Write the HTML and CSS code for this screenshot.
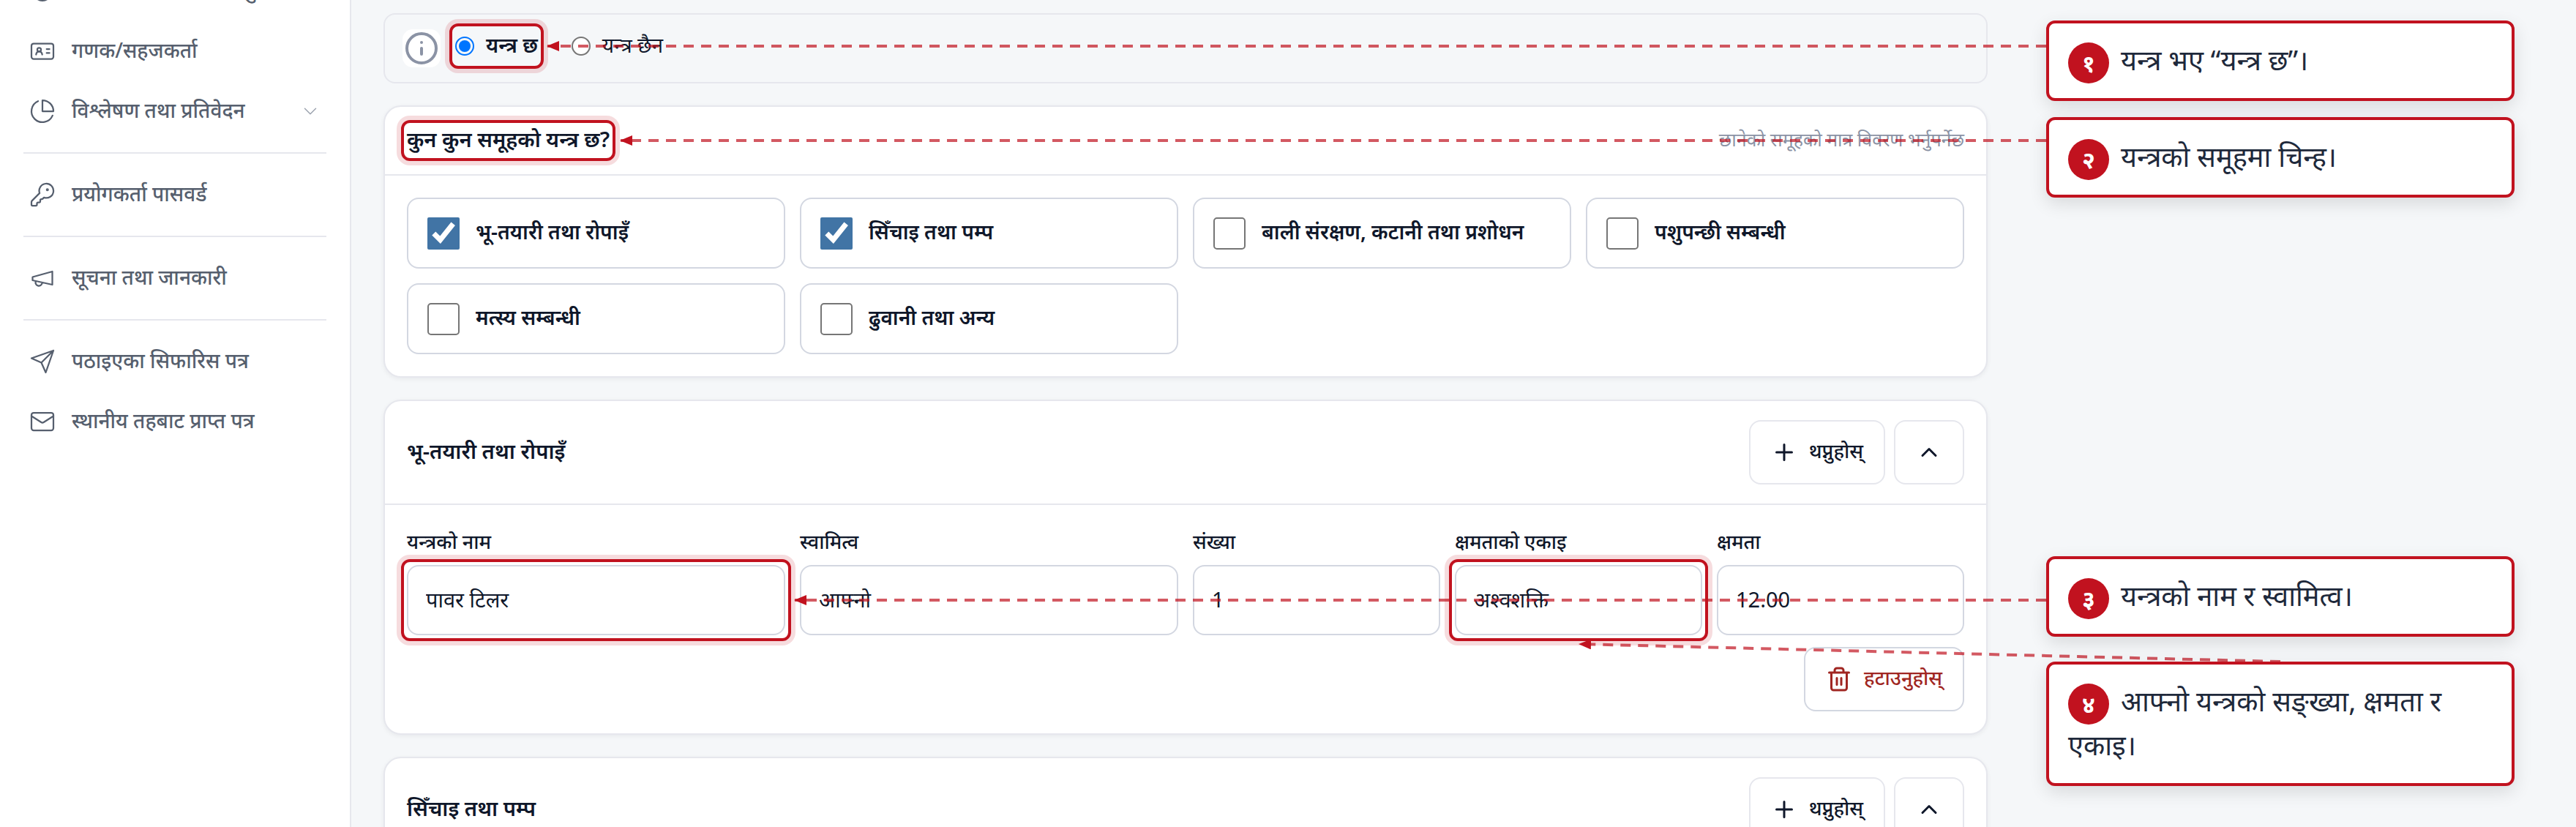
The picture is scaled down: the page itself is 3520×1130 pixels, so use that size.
FILE: index.html
```
<!DOCTYPE html>
<html lang="ne">
<head>
    <meta charset="UTF-8">
    <meta name="viewport" content="width=device-width, initial-scale=1.0">
    <title>यन्त्र विवरण</title>
    <link rel="stylesheet" href="styles.css">
</head>
<body>
<div class="app">
    <nav class="sidebar">
        <ul class="menu">
            <li><a href="#">
                <svg class="icon" viewBox="0 0 24 24"><circle cx="12" cy="12" r="8.5"/></svg>
                <span>किसान परिवार तथा वस्तु</span>
            </a></li>
            <li><a href="#">
                <svg class="icon" viewBox="0 0 24 24"><rect x="2" y="5" width="20" height="14" rx="2"/><circle cx="9" cy="10.6" r="1.7"/><path d="M6.2 15c.3-1.6 1.4-2.7 2.8-2.7s2.5 1.1 2.8 2.7M15.8 10h2.6M15.8 13.6h2.6"/></svg>
                <span>गणक/सहजकर्ता</span>
            </a></li>
            <li><a href="#">
                <svg class="icon" viewBox="0 0 24 24"><path d="M21.2 15.9A10 10 0 1 1 8 2.8M22 12A10 10 0 0 0 12 2v10Z"/></svg>
                <span>विश्लेषण तथा प्रतिवेदन</span>
                <svg class="chevron" viewBox="0 0 24 24"><path d="m4.5 8.25 7.5 7.5 7.5-7.5"/></svg>
            </a></li>
            <li class="divider"></li>
            <li><a href="#">
                <svg class="icon" viewBox="0 0 24 24"><path d="M2.6 17.4A2 2 0 0 0 2 18.8V21a1 1 0 0 0 1 1h3a1 1 0 0 0 1-1v-1a1 1 0 0 1 1-1h1a1 1 0 0 0 1-1v-1a1 1 0 0 1 1-1h.2a2 2 0 0 0 1.4-.6l.8-.8a6.5 6.5 0 1 0-4-4Z"/><circle cx="16.5" cy="7.5" r=".6"/></svg>
                <span>प्रयोगकर्ता पासवर्ड</span>
            </a></li>
            <li class="divider"></li>
            <li><a href="#">
                <svg class="icon" viewBox="0 0 24 24"><path d="m3 11 18-5v12L3 14v-3ZM11.6 16.8a3 3 0 1 1-5.8-1.6"/></svg>
                <span>सूचना तथा जानकारी</span>
            </a></li>
            <li class="divider"></li>
            <li><a href="#">
                <svg class="icon" viewBox="0 0 24 24"><path d="M22 2 11 13M22 2l-7 20-4-9-9-4 20-7Z"/></svg>
                <span>पठाइएका सिफारिस पत्र</span>
            </a></li>
            <li><a href="#">
                <svg class="icon" viewBox="0 0 24 24"><rect x="2" y="4" width="20" height="16" rx="2"/><path d="m2 7 8.9 5.7a2 2 0 0 0 2.2 0L22 7"/></svg>
                <span>स्थानीय तहबाट प्राप्त पत्र</span>
            </a></li>
        </ul>
    </nav>

    <main class="content">
        <section class="notice">
            <span class="info"><svg viewBox="0 0 24 24"><circle cx="12" cy="12" r="10"/><path d="M12 16v-4M12 8h.01"/></svg></span>
            <label class="radio radio-on mark"><input type="radio" name="machine" checked><span>यन्त्र छ</span></label>
            <label class="radio"><input type="radio" name="machine"><span>यन्त्र छैन</span></label>
        </section>

        <section class="card">
            <div class="card-head">
                <h2 class="mark">कुन कुन समूहको यन्त्र छ?</h2>
                <span class="hint">छानेको समूहको मात्र विवरण भर्नुपर्नेछ</span>
            </div>
            <div class="options">
                <label class="option"><input type="checkbox" checked><span>भू-तयारी तथा रोपाइँ</span></label>
                <label class="option"><input type="checkbox" checked><span>सिँचाइ तथा पम्प</span></label>
                <label class="option"><input type="checkbox"><span>बाली संरक्षण, कटानी तथा प्रशोधन</span></label>
                <label class="option"><input type="checkbox"><span>पशुपन्छी सम्बन्धी</span></label>
                <label class="option"><input type="checkbox"><span>मत्स्य सम्बन्धी</span></label>
                <label class="option"><input type="checkbox"><span>ढुवानी तथा अन्य</span></label>
            </div>
        </section>

        <section class="card">
            <div class="card-head">
                <h2>भू-तयारी तथा रोपाइँ</h2>
                <div class="actions">
                    <button type="button" class="btn"><svg viewBox="0 0 24 24"><path d="M12 5v14M5 12h14"/></svg><span>थप्नुहोस्</span></button>
                    <button type="button" class="btn btn-toggle" aria-label="बन्द"><svg viewBox="0 0 24 24"><path d="m18 15-6-6-6 6"/></svg></button>
                </div>
            </div>
            <div class="fields">
                <div class="field wide">
                    <label for="name">यन्त्रको नाम</label>
                    <div class="control mark"><input type="text" id="name" value="पावर टिलर"></div>
                </div>
                <div class="field wide">
                    <label for="owner">स्वामित्व</label>
                    <div class="control"><input type="text" id="owner" value="आफ्नो"></div>
                </div>
                <div class="field">
                    <label for="count">संख्या</label>
                    <div class="control"><input type="text" id="count" value="1"></div>
                </div>
                <div class="field">
                    <label for="unit">क्षमताको एकाइ</label>
                    <div class="control mark"><input type="text" id="unit" value="अश्वशक्ति"></div>
                </div>
                <div class="field">
                    <label for="capacity">क्षमता</label>
                    <div class="control"><input type="text" id="capacity" value="12.00"></div>
                </div>
            </div>
            <div class="card-foot">
                <button type="button" class="btn btn-delete"><svg viewBox="0 0 24 24"><path d="M3 6h18M19 6v14a2 2 0 0 1-2 2H7a2 2 0 0 1-2-2V6M8 6V4a2 2 0 0 1 2-2h4a2 2 0 0 1 2 2v2M10 11v6M14 11v6"/></svg><span>हटाउनुहोस्</span></button>
            </div>
        </section>

        <section class="card">
            <div class="card-head">
                <h2>सिँचाइ तथा पम्प</h2>
                <div class="actions">
                    <button type="button" class="btn"><svg viewBox="0 0 24 24"><path d="M12 5v14M5 12h14"/></svg><span>थप्नुहोस्</span></button>
                    <button type="button" class="btn btn-toggle" aria-label="बन्द"><svg viewBox="0 0 24 24"><path d="m18 15-6-6-6 6"/></svg></button>
                </div>
            </div>
        </section>
    </main>

    <!-- Arrows from the notes to the marked fields -->
    <svg class="arrows" width="3520" height="1130" viewBox="0 0 3520 1130">
        <defs>
            <marker id="head" markerUnits="userSpaceOnUse" markerWidth="17" markerHeight="14" refX="16" refY="7" orient="auto">
                <path d="M0 0 17 7 0 14Z"/>
            </marker>
        </defs>
        <path class="arrow" d="M2796 63H748"/>
        <path class="arrow" d="M2796 192H848"/>
        <path class="arrow" d="M2796 820H1086"/>
        <path class="arrow" d="M3116 904 2158 880"/>
    </svg>

    <aside class="notes">
        <div class="note-group">
            <p class="note"><b>१</b>यन्त्र भए “यन्त्र छ”।</p>
            <p class="note"><b>२</b>यन्त्रको समूहमा चिन्ह।</p>
        </div>
        <div class="note-group">
            <p class="note"><b>३</b>यन्त्रको नाम र स्वामित्व।</p>
            <p class="note"><b>४</b>आफ्नो यन्त्रको सङ्ख्या, क्षमता र एकाइ।</p>
        </div>
    </aside>
</div>
</body>
</html>
```
FILE: styles.css
```
* {
    box-sizing: border-box;
}

body {
    margin: 0;
    font-family: "Noto Sans", "Noto Sans Devanagari", sans-serif;
    font-size: 28px;
    color: #0f172a;
    background-color: #f5f7f9;
}

svg {
    fill: none;
    stroke: currentColor;
    stroke-width: 2;
    stroke-linecap: round;
    stroke-linejoin: round;
    flex-shrink: 0;
}

.app {
    position: relative;
    display: flex;
    height: 100vh;
    overflow: hidden;
}

/* Sidebar */
.sidebar {
    width: 480px;
    flex-shrink: 0;
    padding: 0 32px;
    background-color: #fff;
    border-right: 2px solid #e6e7ed;
}

/* list is scrolled, the first item is nearly out of view */
.menu {
    list-style-type: none;
    margin: -53px 0 0;
    padding: 0;
}

.menu a {
    display: flex;
    align-items: center;
    gap: 22px;
    height: 82px;
    padding: 0 10px 0 8px;
    color: #565f6e;
    font-weight: 500;
    text-decoration: none;
}

/* matras hang low, so lift the text to the middle of its icon */
.menu span,
.radio span,
.option span,
.btn span {
    padding-bottom: 5px;
}

.menu .icon {
    width: 36px;
    height: 36px;
    stroke-width: 1.5;
}

.menu .chevron {
    width: 24px;
    height: 24px;
    margin-left: auto;
    stroke-width: 1.5;
    color: #9ca3af;
}

.divider {
    height: 2px;
    margin: 15px 0;
    background-color: #e6e7ed;
}

/* Form */
.content {
    flex: 1;
    padding: 18px 80px 0 44px;
}

.notice {
    display: flex;
    align-items: flex-start;
    height: 96px;
    margin-bottom: 30px;
    padding: 20px 24px;
    border: 2px solid #e6e7ed;
    border-radius: 16px;
}

.info {
    display: flex;
    width: 52px;
    height: 52px;
    margin-right: 20px;
    padding: 2px;
    border-radius: 14px;
    background-color: #fff;
    color: #8b93a5;
}

.radio {
    display: flex;
    align-items: center;
    gap: 16px;
    height: 46px;
    margin-right: 46px;
    line-height: 40px;
}

.radio-on {
    font-weight: 600;
}

.radio input {
    appearance: none;
    width: 26px;
    height: 26px;
    margin: 0;
    padding: 3px;
    border: 2px solid #767676;
    border-radius: 50%;
    background-color: #fff;
}

.radio input:checked {
    border-color: #0075ff;
    background-color: #0075ff;
    background-clip: content-box;
}

.card {
    margin-bottom: 30px;
    background-color: #fff;
    border: 2px solid #e6e7ed;
    border-radius: 24px;
    box-shadow: 0 2px 6px rgba(15, 23, 42, 0.06);
}

.card-head {
    display: flex;
    align-items: center;
    justify-content: space-between;
    padding: 26px 30px;
    border-bottom: 2px solid #e6e7ed;
}

h2 {
    margin: 0;
    padding-bottom: 4px;
    font-size: 29px;
    font-weight: 600;
    line-height: 36px;
}

.hint {
    padding-bottom: 4px;
    font-size: 25px;
    line-height: 36px;
    color: #8b93a5;
}

.options {
    display: grid;
    grid-template-columns: repeat(4, 1fr);
    gap: 20px;
    padding: 30px;
}

.option {
    display: flex;
    align-items: center;
    gap: 22px;
    height: 97px;
    padding: 0 26px;
    border: 2px solid #d3d7e1;
    border-radius: 16px;
    font-weight: 600;
}

.option input {
    width: 44px;
    height: 44px;
    margin: 0;
    accent-color: #4174a5;
}

.option input:not(:checked) {
    appearance: none;
    border: 2px solid #767676;
    border-radius: 5px;
}

.fields {
    display: grid;
    grid-template-columns: repeat(12, 1fr);
    gap: 20px;
    padding: 30px 30px 16px;
}

.field {
    grid-column: span 2;
}

.field.wide {
    grid-column: span 3;
}

.field label {
    display: block;
    margin-bottom: 12px;
    font-size: 27px;
    font-weight: 500;
    line-height: 40px;
}

.field input {
    display: block;
    width: 100%;
    height: 96px;
    padding: 0 24px 4px;
    border: 2px solid #d3d7e1;
    border-radius: 16px;
    background-color: #fff;
    font: inherit;
    font-size: 29px;
    color: inherit;
}

.card-foot {
    display: flex;
    justify-content: flex-end;
    padding: 0 30px 30px;
}

.actions {
    display: flex;
    gap: 12px;
}

.btn {
    display: flex;
    align-items: center;
    justify-content: center;
    gap: 16px;
    height: 88px;
    padding: 0 28px;
    border: 2px solid #e6e7ed;
    border-radius: 16px;
    background-color: #fff;
    font: inherit;
    font-size: 27px;
    font-weight: 500;
    color: inherit;
}

.btn svg {
    width: 36px;
    height: 36px;
}

.btn-toggle {
    width: 96px;
}

.btn-delete {
    border-color: #d3d7e1;
    color: #a02622;
}

/* Highlight around a field */
.mark {
    position: relative;
}

.mark::after {
    content: "";
    position: absolute;
    inset: -8px;
    border: 4px solid #c1121f;
    border-radius: 12px;
    box-shadow: 0 0 0 6px rgba(193, 18, 31, 0.15);
    pointer-events: none;
}

.arrows {
    position: absolute;
    top: 0;
    left: 0;
    pointer-events: none;
}

.arrow {
    stroke: #c1121f;
    stroke-width: 4;
    stroke-opacity: 0.7;
    stroke-dasharray: 14 10;
    stroke-linecap: butt;
    marker-end: url(#head);
}

.arrows marker path {
    fill: #c1121f;
    stroke: none;
}

/* Notes */
.notes {
    position: relative;
    display: flex;
    flex-direction: column;
    gap: 490px;
    width: 724px;
    flex-shrink: 0;
    padding: 28px 84px 0 0;
}

.note-group {
    display: flex;
    flex-direction: column;
    gap: 22px;
}

.note-group + .note-group {
    gap: 34px;
}

.note {
    margin: 0;
    padding: 19px 26px 23px;
    background-color: #fff;
    border: 4px solid #c1121f;
    border-radius: 12px;
    box-shadow: 0 8px 24px rgba(0, 0, 0, 0.12);
    font-size: 38px;
    line-height: 60px;
    color: #1e293b;
}

/* negative margins keep the badge from stretching the line */
.note b {
    display: inline-flex;
    align-items: center;
    justify-content: center;
    width: 56px;
    height: 56px;
    margin: -4px 16px -4px 0;
    border-radius: 50%;
    background-color: #c1121f;
    font-size: 32px;
    line-height: 56px;
    color: #fff;
    vertical-align: middle;
}
```
